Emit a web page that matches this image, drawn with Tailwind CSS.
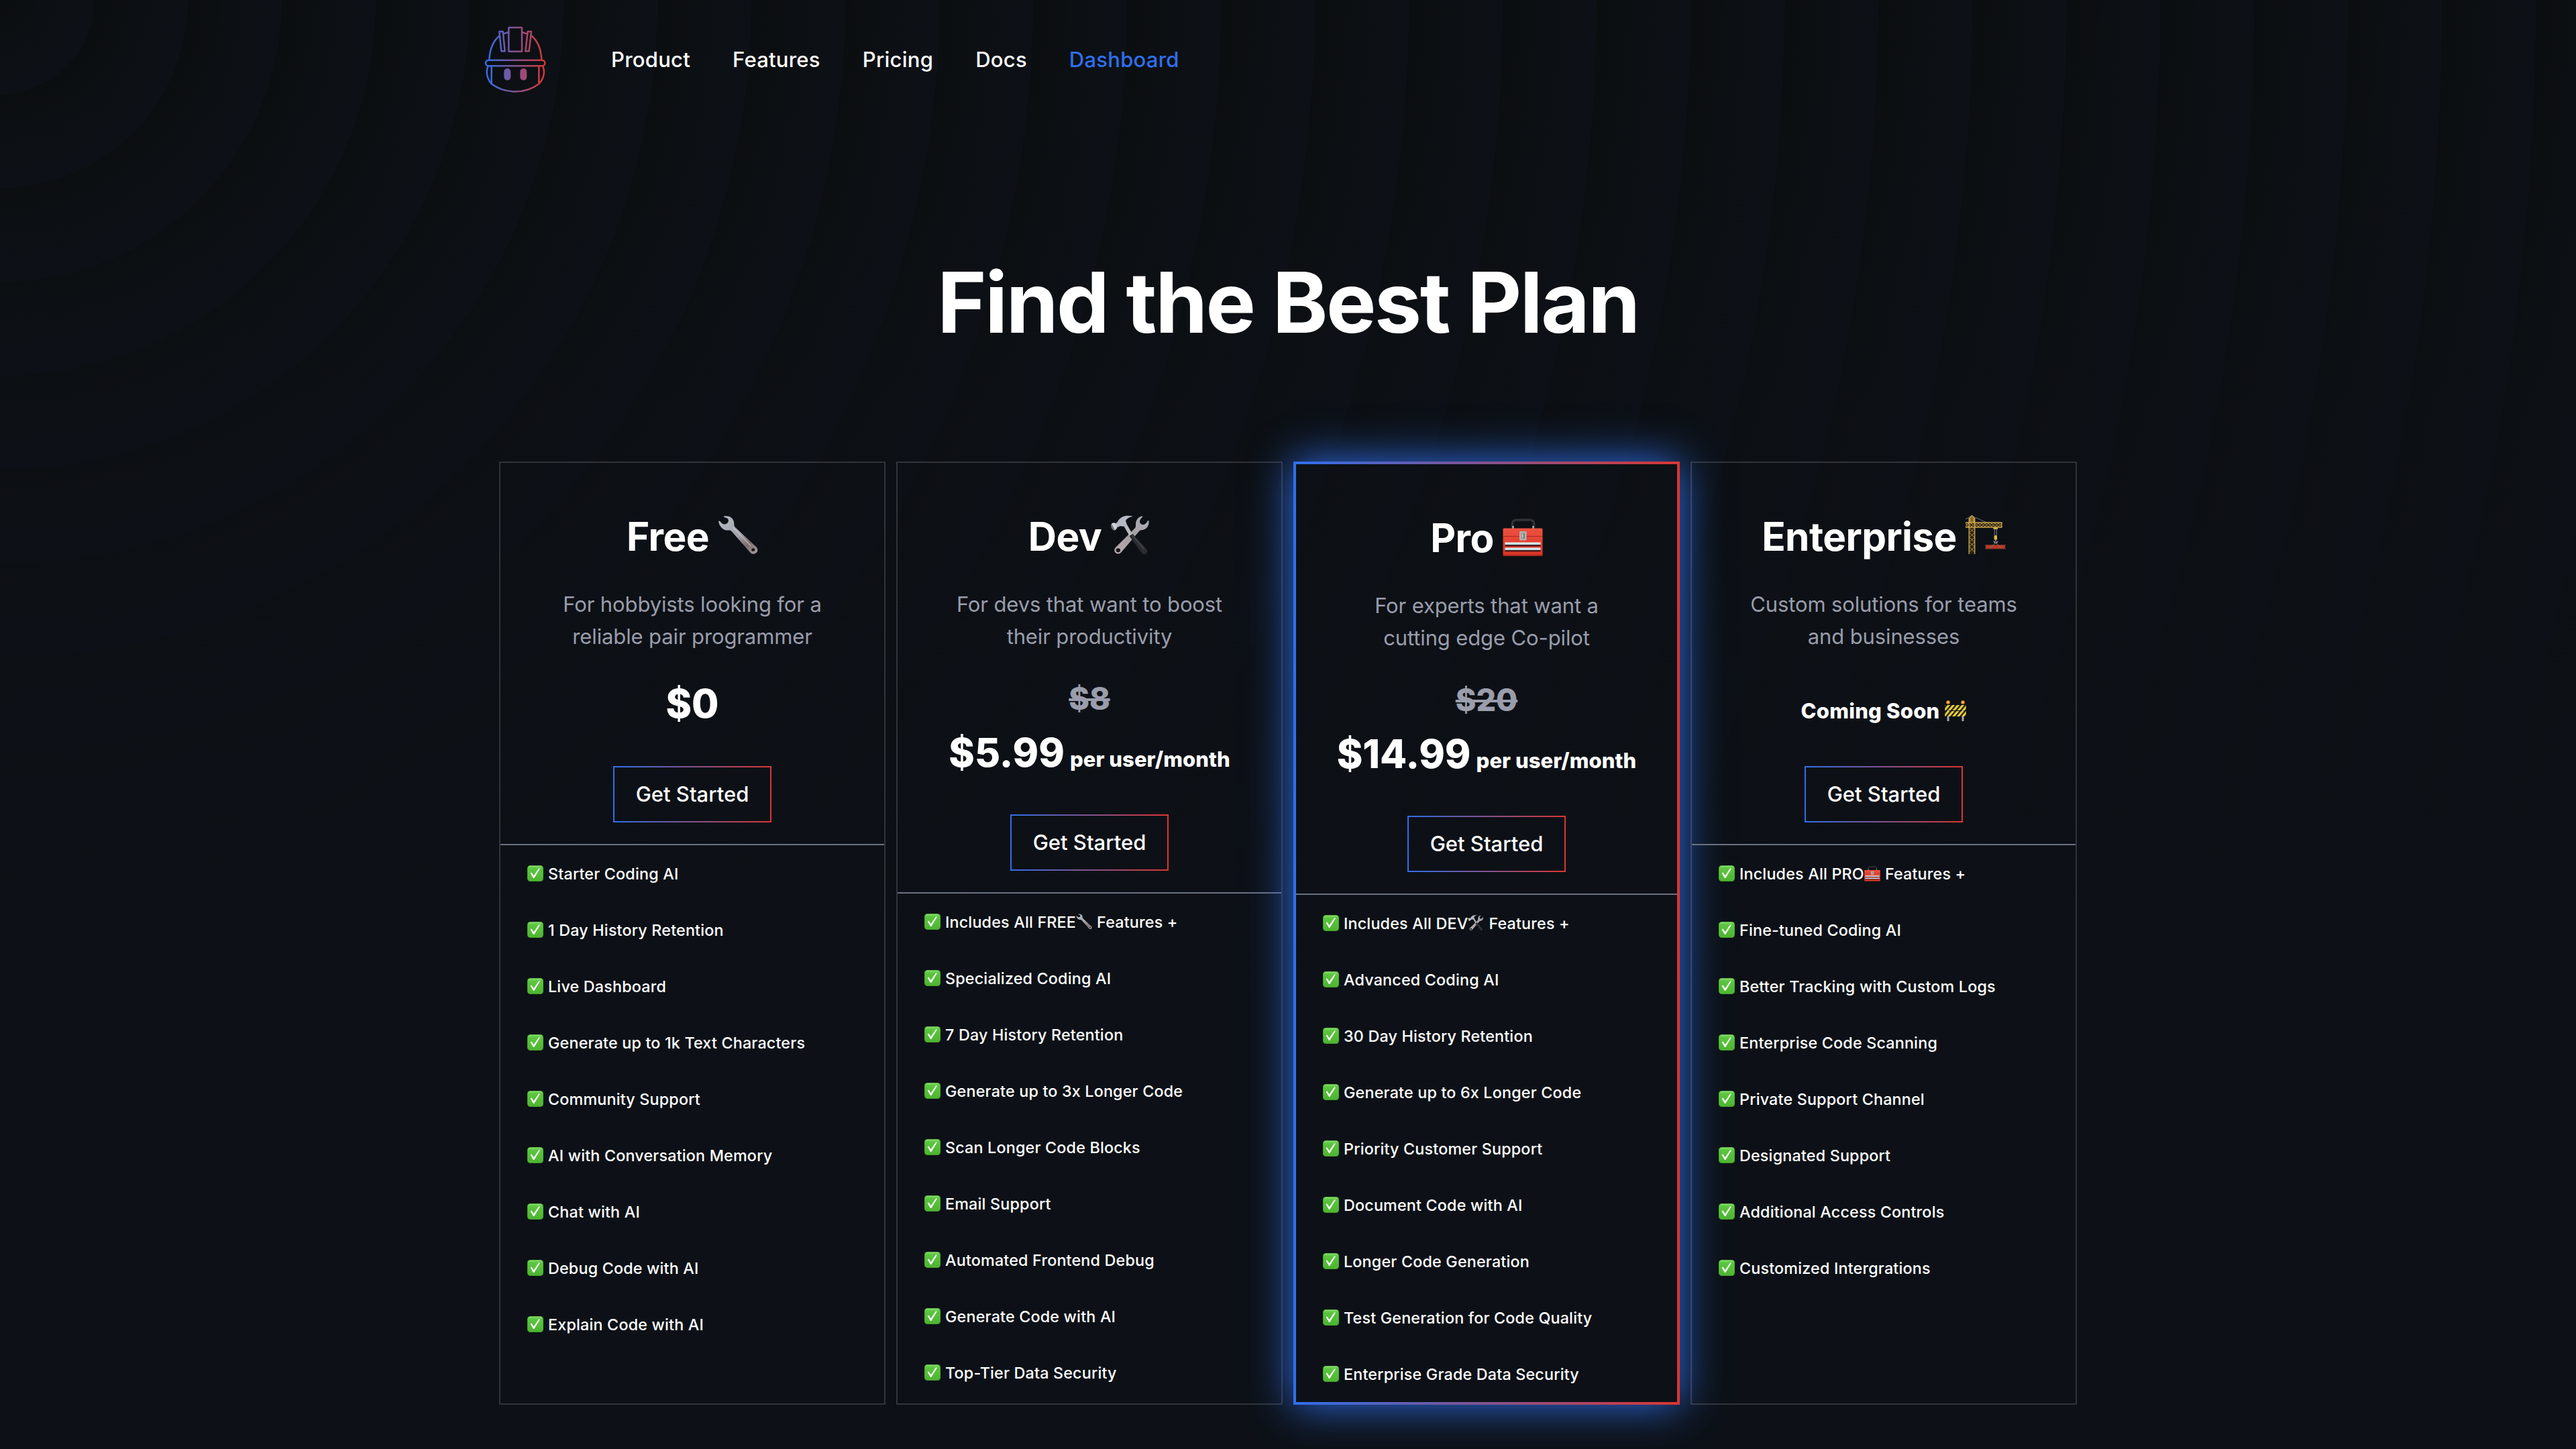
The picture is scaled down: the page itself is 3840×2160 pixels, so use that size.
<!DOCTYPE html>
<html lang="en">
<head>
<meta charset="utf-8">
<title>Find the Best Plan</title>
<script src="https://cdn.jsdelivr.net/npm/@tailwindcss/browser@4"></script>
</head>
<body class="h-[2160px] w-[3840px] overflow-hidden bg-[#0d1117] bg-[linear-gradient(to_bottom,rgba(13,17,23,0)_0px,rgba(13,17,23,0.35)_500px,#0d1117_1500px),repeating-radial-gradient(circle_at_0_0,#0b0e10_0px,#0d1117_140px)] font-[Inter,sans-serif] text-white">

<!-- shared icon definitions -->
<svg class="absolute size-0" aria-hidden="true">
  <defs>
    <linearGradient id="steel" x1="0" y1="0" x2="1" y2="1"><stop offset="0" stop-color="#b3bcc8"/><stop offset=".5" stop-color="#a3a4aa"/><stop offset=".75" stop-color="#7d6c6c"/><stop offset="1" stop-color="#a9a2a3"/></linearGradient>
    <linearGradient id="steelup" x1="1" y1="0" x2="0" y2="1"><stop offset="0" stop-color="#a9aeba"/><stop offset=".55" stop-color="#a79ea0"/><stop offset="1" stop-color="#b5adb0"/></linearGradient>
    <linearGradient id="green" x1="0" y1="0" x2="0" y2="1"><stop offset="0" stop-color="#8ade72"/><stop offset=".18" stop-color="#5cc63f"/><stop offset="1" stop-color="#4eb432"/></linearGradient>
    <linearGradient id="red" x1="0" y1="0" x2="0" y2="1"><stop offset="0" stop-color="#ee5140"/><stop offset="1" stop-color="#d93425"/></linearGradient>
    <linearGradient id="bar" x1="0" y1="0" x2="0" y2="1"><stop offset="0" stop-color="#eef7fa"/><stop offset=".55" stop-color="#b5d8e4"/><stop offset=".6" stop-color="#3d1f1f"/><stop offset="1" stop-color="#5a1a15"/></linearGradient>
    <linearGradient id="brand" gradientUnits="userSpaceOnUse" x1="70" y1="0" x2="340" y2="0"><stop offset="0" stop-color="#2f6feb"/><stop offset="1" stop-color="#da3633"/></linearGradient>
    <pattern id="stripes" width="7" height="8" patternUnits="userSpaceOnUse" patternTransform="skewX(-40)"><rect width="7" height="8" fill="#f2d22e"/><rect width="3.2" height="8" fill="#26241c"/></pattern>
  </defs>
  <symbol id="check" viewBox="0 0 24 24">
    <rect width="24" height="24" rx="4.5" fill="#3c9a25"/><rect x=".5" y=".4" width="23" height="22.8" rx="4.2" fill="url(#green)"/>
    <path d="M4.6 11.6l1.9-1 3.1 4.7 7.6-11 1.8.4-8.7 14.2H9z" fill="#fff"/>
  </symbol>
  <symbol id="wrench" viewBox="0 0 60 60">
    <path d="M9 1.5C18-.2 24.500 5 24.300 13c0 2 .2 3.500 1.900 5.300L56.500 46.500c3.500 3.300 3.600 7 .8 9.600s-6.500 2.300-9.500-1.100L21 24.500c-1.500-1.700-3-2.200-5.300-1.900C8.500 23 2.500 18 1 9l1.600-.6L6.500 12.500c3 1.800 7 1 8.700-1.900 1.300-2.500.8-4.500-1.200-6L9.400 3z" fill="url(#steel)"/>
    <path d="M22.500 18L49 45.500" stroke="#c9ccd2" stroke-width="1.600" opacity=".7"/>
    <ellipse cx="52.800" cy="51.500" rx="2.600" ry="2.300" fill="#1a1618"/>
  </symbol>
  <symbol id="tools" viewBox="0 0 60 60">
    <path d="M47.500 1.200l.9 1.300c-5 4-5.400 8-2.700 10.600 3 2.500 7.400 1 10.300-5l1.500.2c.8 7-3 13-9.700 13.800-2 .3-3.500.5-4.800 2L17.500 54c-2.700 3.800-6.500 4.500-9.300 2.300-2.700-2.300-2.600-6 .6-9l27.700-27.600c1.300-1.500 1.600-3 1.500-5C37.700 7.500 41.500 2.500 47.500 1.200z" fill="url(#steelup)"/>
    <ellipse cx="11.800" cy="52.300" rx="3.200" ry="3" fill="#15171b"/>
    <path d="M19 14l4.500-2.500 10.500 18-4.500 2.800z" fill="#b9b9c0"/>
    <path d="M28.500 31l5-3.200L54 50.500c2 3 1.500 5-.5 6.700s-5 1.300-6.800-1.200z" fill="#2b2c30"/>
    <path d="M33 30l17 20" stroke="#4a4b50" stroke-width="1.300"/>
    <path d="M8 12c3-.8 3-3 5.500-6C18 1 26-.6 34 2c-5.500.8-9 2.500-11 6.500l1.500 4L19 17c-3-1.500-5.500-1-8 1.500z" fill="#b4b9c3"/>
    <path d="M2.500 12.300c2-1.500 5-1.300 6.800 1.500 1.700 2.800 1.500 5.500-.8 7.500L5.500 23 1 15z" fill="#ccd0d6"/><path d="M1 14.500l1.500-.7 4.300 8L5.500 23C2.500 21 .6 18 1 14.500z" fill="#70757d"/>
  </symbol>
  <symbol id="toolbox" viewBox="0 0 60 60">
    <path d="M14.500 16.500V10c0-3 2.500-5 6-5h20c3.500 0 6 2 6 5v6.500" fill="none" stroke="#303237" stroke-width="3.600"/>
    <path d="M15.500 14v4M45.500 14v4" stroke="#c9c9c9" stroke-width="2"/>
    <rect x=".5" y="17.500" width="59" height="41.500" rx="1.500" fill="url(#red)"/>
    <path d="M1 29.500h58" stroke="#a42820" stroke-width="1"/>
    <rect x="3.500" y="38.500" width="53" height="6" fill="url(#bar)"/><rect x="3.500" y="46.500" width="53" height="6" fill="url(#bar)"/>
    <rect x="25" y="22" width="10.500" height="13.500" rx="1.500" fill="#b5b3b3"/><rect x="27.500" y="24.500" width="5.500" height="8.500" rx="1" fill="#7f7c7d"/><path d="M28.500 25.500h2v6.500h-2z" fill="#cfcdcd"/>
    <path d="M1 58h58" stroke="#9a231a" stroke-width="1.500"/>
  </symbol>
  <symbol id="crane" viewBox="0 0 60 60">
    <path d="M9 1L33 11.500M9 1L0 5.700" stroke="#6f7073" stroke-width="1" fill="none"/>
    <path d="M6.500 11V3.500L9.500.5l3 3V11" fill="#8a6a22" stroke="#cfa548" stroke-width="1.300"/>
    <path d="M0 11h54v7H0zM5 18h9v40H5z" fill="#2a2317"/>
    <g stroke="#c39a42" stroke-width="1" fill="none"><path d="M0 12l4 5 5-5 5 5 5-5 5 5 5-5 5 5 5-5 5 5 5-5 5 5M0 17l4-5 5 5 5-5 5 5 5-5 5 5 5-5 5 5 5-5 5 5 5-5"/><path d="M5.500 19l8 7-8 7 8 7-8 7 8 8M13.500 19l-8 7 8 7-8 7 8 7-8 8"/></g>
    <path d="M0 11h54M0 18h54M5.200 4v54M13.700 4v54" stroke="#d3ab4c" stroke-width="1.300"/>
    <path d="M54 10.500v8" stroke="#d3ab4c" stroke-width="1.300"/><path d="M41.500 18h6.500v3h-6.500z" fill="#d3ab4c"/>
    <path d="M43.300 21v10M46.300 21v10" stroke="#8b8d90" stroke-width=".9"/>
    <rect x="42.600" y="30" width="4.400" height="6.700" rx="1.500" fill="#d6bf3a"/>
    <path d="M44.800 37v2.500M42.300 38.500c.5 4 5 4 5.200 0" stroke="#a8aaad" stroke-width="1.300" fill="none"/>
    <path d="M29 44h31l-1 1.500v3l1 1.700H29l1-1.700v-3z" fill="#b83a25"/><path d="M29 44.600h31M29 49.800h31" stroke="#7d3428" stroke-width="1"/>
    <path d="M44.800 41l-8.500 8.500M44.800 41l8.500 8.500" stroke="#8b7a77" stroke-width=".9"/>
  </symbol>
  <symbol id="barrier" viewBox="0 0 32 32">
    <path d="M3.500 7h3v24h-3zM25.500 7h3v24h-3z" fill="#a6a8ab"/>
    <circle cx="5" cy="3" r="2.800" fill="#f08a24"/><circle cx="27" cy="3" r="2.800" fill="#f08a24"/><circle cx="5" cy="2.600" r="1.200" fill="#ffd27a"/><circle cx="27" cy="2.600" r="1.200" fill="#ffd27a"/>
    <rect x=".3" y="7" width="31.400" height="8" fill="url(#stripes)"/><rect x=".3" y="16" width="31.400" height="8" fill="url(#stripes)"/>
  </symbol>
</svg>

<header class="flex h-44 items-center pl-[700px]">
  <svg class="-mt-1.5 h-[130px] w-[140px]" viewBox="0 0 420 390" fill="none" stroke="url(#brand)" stroke-width="7.500" stroke-linejoin="round">
    <path d="M88 208C90 160 105 122 136 98M322 208C320 160 305 122 275 98M151 91L174 84M234 84L259 92"/>
    <path d="M133 81h16l9 88h-16zM276 81h-16l-10 88h16z"/>
    <rect x="175" y="63" width="59" height="107" rx="2"/>
    <rect x="72" y="209" width="265" height="26" rx="13"/>
    <path d="M82 237C72 262 78 292 98 315M328 237C338 262 332 292 310 315M98 237V315C160 361 250 361 310 315V237"/>
    <g fill="url(#brand)" stroke="none"><rect x="154" y="246" width="30" height="53" rx="15"/><rect x="226" y="246" width="30" height="53" rx="15"/></g>
  </svg>
  <nav class="ml-[71px] flex gap-[63px] pt-0.5 text-[31px] leading-[48px] font-medium tracking-[0.008em]">
    <a>Product</a><a>Features</a><a>Pricing</a><a>Docs</a><a class="text-[#2f6feb]">Dashboard</a>
  </nav>
</header>

<main>
  <h1 class="mt-[211px] text-center text-[125px] leading-[128px] font-bold tracking-[-0.0195em]">Find the Best Plan</h1>
  <section id="plans" class="mx-auto mt-[173px] grid h-[1406px] w-[2352px] grid-cols-4 gap-4"></section>
</main>

<script>
const icon = (id, cls) => `<svg class="shrink-0 ${cls}"><use href="#${id}"/></svg>`;
const amount = (now, was) => `
  ${was ? `<div class="mt-10 text-[46.5px] leading-[56px] font-extrabold text-[#9a9dab] line-through">${was}</div>` : ''}
  <div class="${was ? 'mt-[17px] mb-14' : 'mt-10 mb-[57px]'} flex h-[72px] items-baseline justify-center gap-2 font-extrabold">
    <span class="text-[58.5px] leading-[72px]">${now}</span>${was ? '<span class="text-[31px] leading-10 tracking-[0.0016em]">per user/month</span>' : ''}
  </div>`;
const soon = `<div class="mt-10 mb-[57px] flex h-[72px] items-center justify-center gap-2 pt-[22px] text-[31px] leading-10 font-extrabold tracking-[0.0067em]">Coming Soon${icon('barrier', 'size-8')}</div>`;
const plans = [
  { name: 'Free', icon: 'wrench', about: ['For hobbyists looking for a', 'reliable pair programmer'], price: amount('$0'),
    features: ['Starter Coding AI', '1 Day History Retention', 'Live Dashboard', 'Generate up to 1k Text Characters', 'Community Support', 'AI with Conversation Memory', 'Chat with AI', 'Debug Code with AI', 'Explain Code with AI'] },
  { name: 'Dev', icon: 'tools', about: ['For devs that want to boost', 'their productivity'], price: amount('$5.99', '$8'),
    features: [['Includes All FREE', 'wrench'], 'Specialized Coding AI', '7 Day History Retention', 'Generate up to 3x Longer Code', 'Scan Longer Code Blocks', 'Email Support', 'Automated Frontend Debug', 'Generate Code with AI', 'Top-Tier Data Security'] },
  { name: 'Pro', icon: 'toolbox', featured: true, about: ['For experts that want a', 'cutting edge Co-pilot'], price: amount('$14.99', '$20'),
    features: [['Includes All DEV', 'tools'], 'Advanced Coding AI', '30 Day History Retention', 'Generate up to 6x Longer Code', 'Priority Customer Support', 'Document Code with AI', 'Longer Code Generation', 'Test Generation for Code Quality', 'Enterprise Grade Data Security'] },
  { name: 'Enterprise', icon: 'crane', about: ['Custom solutions for teams', 'and businesses'], price: soon,
    features: [['Includes All PRO', 'toolbox'], 'Fine-tuned Coding AI', 'Better Tracking with Custom Logs', 'Enterprise Code Scanning', 'Private Support Channel', 'Designated Support', 'Additional Access Controls', 'Customized Intergrations'] },
];
const feature = f => `<li class="flex items-start">${icon('check', 'mt-1 mr-[7px] size-6')}${
  Array.isArray(f) ? `<span>${f[0]}</span>${icon(f[1], 'mt-1 mr-[7px] size-6')}<span>Features +</span>` : `<span>${f}</span>`}</li>`;
document.getElementById('plans').innerHTML = plans.map(p => `
  <article class="${p.featured
    ? 'border-4 [border-image:linear-gradient(to_right,#2f6feb,#da3633)_1] shadow-[0_0_60px_#2f6feb]'
    : 'border-2 border-white/15'} whitespace-nowrap">
    <div class="flex flex-col items-center border-b-2 border-[#6b7280] pt-[74px] pb-8 text-center">
      <h2 class="flex gap-[13px] text-[58.5px] leading-[72px] font-bold tracking-[-0.0100em]"><span>${p.name}</span>${icon(p.icon, 'mt-1 size-[60px]')}</h2>
      <p class="mt-[41px] text-[31px] leading-[48px] tracking-[-0.004em] text-[#9a9dab]">${p.about.join('<br>')}</p>
      ${p.price}
      <button class="h-[84px] w-[236px] border-2 [border-image:linear-gradient(to_right,#2f6feb,#da3633)_1] text-[31px] font-medium">Get Started</button>
    </div>
    <ul class="flex flex-col gap-[50px] pt-[26px] pl-10 text-[23.3px] leading-[34px] font-medium tracking-[0.008em]">${p.features.map(feature).join('')}</ul>
  </article>`).join('');
</script>
</body>
</html>
